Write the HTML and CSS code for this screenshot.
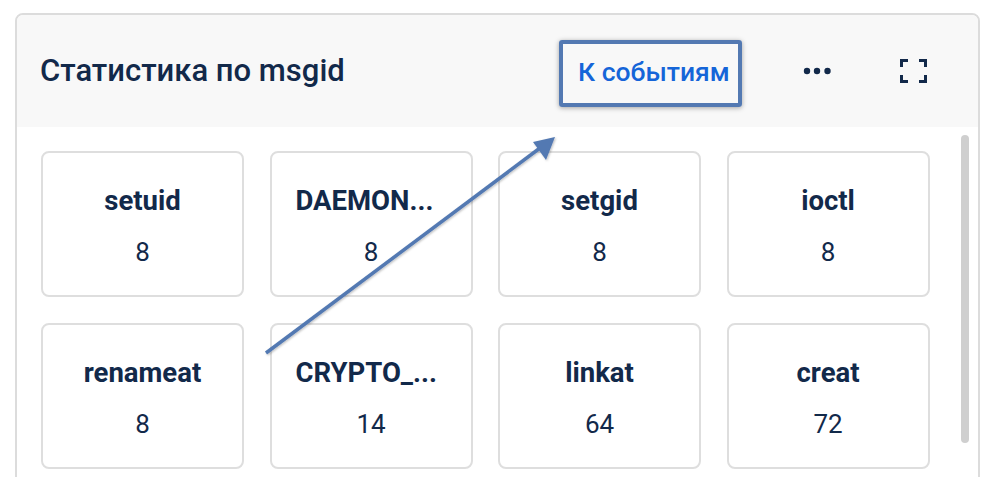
FILE: index.html
```html
<!DOCTYPE html>
<html lang="ru">
<head>
<meta charset="utf-8">
<link rel="stylesheet" href="styles.css">
</head>
<body>
<div class="panel">
  <div class="panel-head">
    <div class="title">Статистика по msgid</div>
    <div class="actions">
      <a class="events-link">К событиям</a>
      <span class="icon-more">
        <svg width="28" height="8" viewBox="0 0 28 8"><circle cx="4" cy="4" r="3.2" fill="#12294a"/><circle cx="14" cy="4" r="3.2" fill="#12294a"/><circle cx="24.5" cy="4" r="3.2" fill="#12294a"/></svg>
      </span>
      <span class="icon-full">
        <svg width="27" height="24" viewBox="0 0 27 24" fill="none" stroke="#12294a" stroke-width="3"><path d="M1.5 8V1.5H8M19 1.5H25.5V8M25.5 16V22.5H19M8 22.5H1.5V16"/></svg>
      </span>
    </div>
  </div>
  <div class="panel-body">
    <div class="grid">
      <div class="card"><div class="card-name">setuid</div><div class="card-value">8</div></div>
      <div class="card"><div class="card-name card-name--cut">DAEMON...</div><div class="card-value">8</div></div>
      <div class="card"><div class="card-name">setgid</div><div class="card-value">8</div></div>
      <div class="card"><div class="card-name">ioctl</div><div class="card-value">8</div></div>
      <div class="card"><div class="card-name">renameat</div><div class="card-value">8</div></div>
      <div class="card"><div class="card-name card-name--cut">CRYPTO_...</div><div class="card-value">14</div></div>
      <div class="card"><div class="card-name">linkat</div><div class="card-value">64</div></div>
      <div class="card"><div class="card-name">creat</div><div class="card-value">72</div></div>
    </div>
    <div class="scrollbar"></div>
  </div>
</div>
<svg class="annot-arrow" width="1001" height="477" viewBox="0 0 1001 477">
  <defs>
    <filter id="sh" x="-10%" y="-10%" width="120%" height="120%"><feDropShadow dx="1" dy="1" stdDeviation="1" flood-color="#000" flood-opacity="0.25"/></filter>
  </defs>
  <g filter="url(#sh)">
    <line x1="266" y1="353" x2="540" y2="148" stroke="#5379b2" stroke-width="3.5"/>
    <path d="M555 137 L546 160 L533 142 Z" fill="#5379b2"/>
  </g>
</svg>
</body>
</html>
```
FILE: styles.css
```css
* { box-sizing: border-box; }
html, body { margin: 0; padding: 0; background: #fff; }
body {
  font-family: Roboto, "Noto Sans", sans-serif;
  color: #12294a;
  width: 1001px;
  height: 477px;
  overflow: hidden;
  position: relative;
}
.panel {
  margin: 13px 0 0 15px;
  width: 965px;
  height: 520px;
  border: 2px solid #dcdcdc;
  border-radius: 8px;
  overflow: hidden;
}
.panel-head {
  height: 112px;
  background: #f8f8f8;
  display: flex;
  align-items: center;
  padding: 0 0 0 23px;
}
.title {
  font-size: 31px;
  font-weight: 500;
  flex: 1;
  padding-bottom: 2px;
}
.actions {
  display: flex;
  align-items: center;
}
.events-link {
  display: flex;
  align-items: center;
  height: 67px;
  margin-top: 5px;
  padding: 0 10px 5px 15px;
  border: 4px solid #5379b2;
  border-radius: 3px;
  box-shadow: 0 1px 5px rgba(0,0,0,0.35);
  color: #1565d8;
  font-size: 26.5px;
  font-weight: 500;
  width: 183px;
  margin-right: 61px;
  white-space: nowrap;
}
.icon-more { display: flex; margin-right: 69px; }
.icon-full { display: flex; margin-right: 51px; }
.panel-body {
  display: flex;
  padding: 24px 0 0 24px;
  position: relative;
}
.grid {
  display: grid;
  grid-template-columns: repeat(4, 203px);
  grid-auto-rows: 146px;
  gap: 26px 25.5px;
}
.card {
  border: 2px solid #dedede;
  border-radius: 8px;
  display: flex;
  flex-direction: column;
  align-items: center;
  padding-top: 32px;
}
.card-name {
  font-size: 27.5px;
  font-weight: 700;
  line-height: 32px;
  white-space: nowrap;
}
.card-name--cut {
  align-self: stretch;
  text-align: left;
  padding-left: 24px;
}
.card-value {
  font-size: 26px;
  line-height: 30px;
  margin-top: 20px;
}
.scrollbar {
  width: 8px;
  height: 308px;
  background: #cfcfcf;
  border-radius: 4px;
  margin: -16px 0 0 31px;
}
.annot-arrow {
  position: absolute;
  left: 0;
  top: 0;
  pointer-events: none;
}
```
